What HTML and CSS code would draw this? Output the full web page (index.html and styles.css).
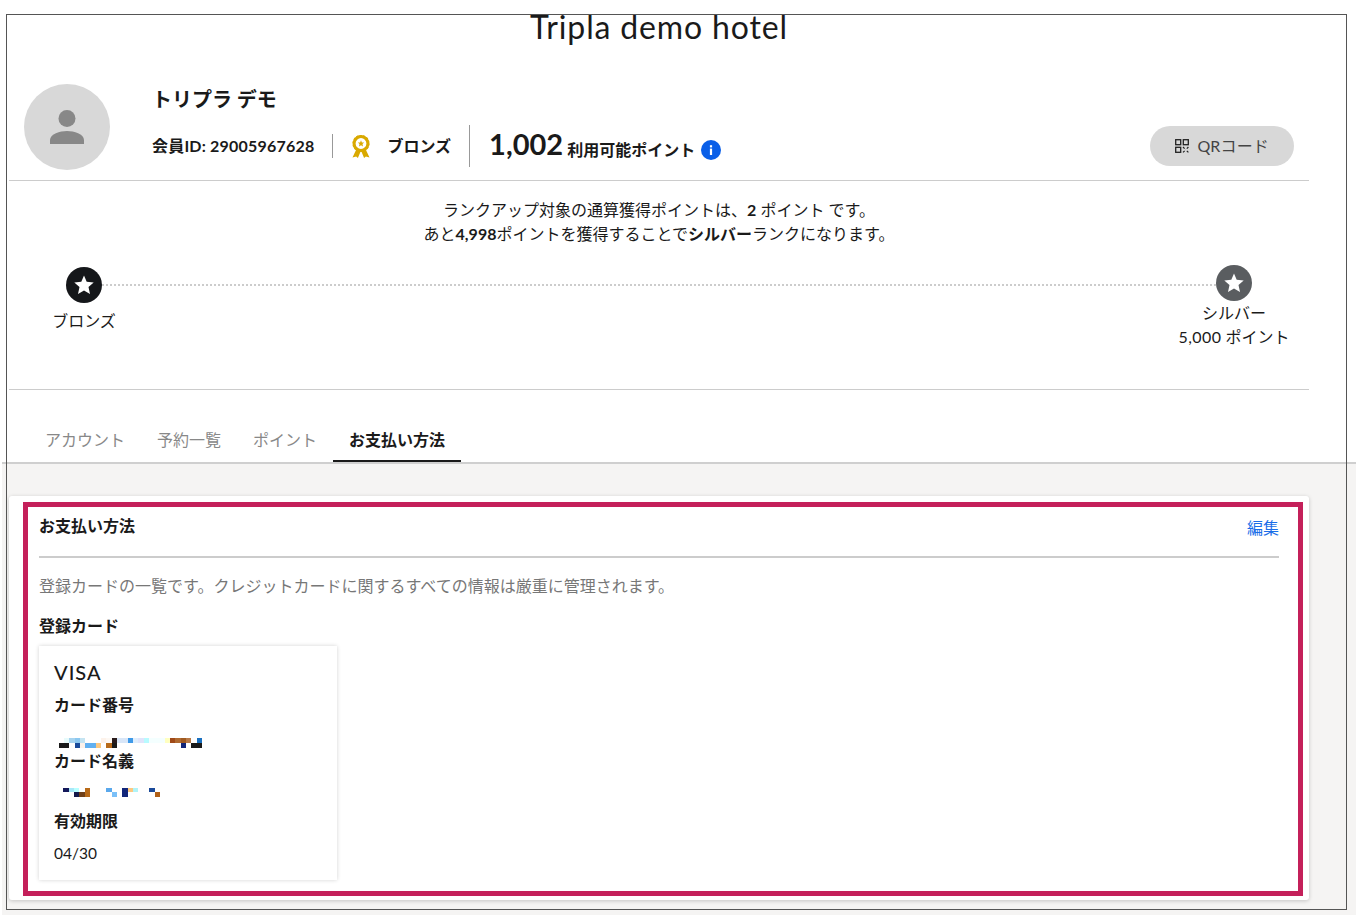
FILE: index.html
```html
<!DOCTYPE html>
<html lang="ja">
<head>
	<meta charset="UTF-8">
	<title>Tripla demo hotel</title>
	<link rel="stylesheet" href="styles.css">
</head>
<body>
	<div class="frame"></div>
	<div class="top">
		<h1 class="title">Tripla demo hotel</h1>

		<div class="profile">
			<div class="avatar">
				<svg width="34" height="34" viewBox="0 0 34 34"><circle cx="17" cy="8.5" r="8.5" fill="#888"/><path d="M0 34v-4c0-6 10-9 17-9s17 3 17 9v4z" fill="#888"/></svg>
			</div>
			<div class="profileInfo">
				<div class="name">トリプラ デモ</div>
				<div class="stats">
					<span class="memberId">会員ID: 29005967628</span>
					<span class="divider short"></span>
					<svg class="medal" width="18" height="23" viewBox="0 0 18 23">
						<path d="M4.5 14L0.5 22.5l3.6-.9 1.8 1.4L8.6 16.5zM13.5 14l4 8.5-3.6-.9-1.8 1.4L9.4 16.5z" fill="#d9a900"/>
						<circle cx="9" cy="8.5" r="6.9" fill="#fff" stroke="#d9a900" stroke-width="3"/>
						<circle cx="9" cy="8.5" r="8" fill="none" stroke="#d9a900" stroke-width="1.2" stroke-dasharray="2.2 1.4"/>
						<polygon points="9,5.3 9.9,7.4 12.2,7.6 10.5,9.1 11,11.4 9,10.2 7,11.4 7.5,9.1 5.8,7.6 8.1,7.4" fill="#d9a900"/>
					</svg>
					<span class="rankName">ブロンズ</span>
					<span class="divider"></span>
					<div class="points">
						<span class="pointsNum">1,002</span>
						<span class="pointsLabel">利用可能ポイント</span>
						<svg class="info" width="20" height="20" viewBox="0 0 20 20"><circle cx="10" cy="10" r="10" fill="#0a5fe8"/><rect x="8.9" y="8.6" width="2.2" height="6.4" fill="#fff"/><rect x="8.9" y="5.2" width="2.2" height="2.2" fill="#fff"/></svg>
					</div>
				</div>
			</div>
			<button class="qrButton">
				<svg width="14" height="14" viewBox="0 0 14 14" fill="none" stroke="#222" stroke-width="1.3">
					<rect x="0.7" y="0.7" width="5" height="5"/>
					<rect x="8.3" y="0.7" width="5" height="5"/>
					<rect x="0.7" y="8.3" width="5" height="5"/>
					<path d="M8 8l1.6 1.6M13.4 8l-1.6 1.6M8 13.4l1.6-1.6M13.4 13.4l-1.6-1.6M10.7 10.7h0.1" stroke-width="1.2"/>
				</svg>
				QRコード
			</button>
		</div>

		<div class="rank">
			<p class="rankMsg">ランクアップ対象の通算獲得ポイントは、<b>2</b> ポイント です。<br>あと<b>4,998</b>ポイントを獲得することで<b>シルバー</b>ランクになります。</p>
			<div class="rankTrack">
				<div class="rankDot bronze"><svg width="20" height="20" viewBox="0 0 20 20"><polygon points="10,0.5 12.7,6.7 19.7,7.5 14.5,12.1 16,18.9 10,15.4 4,18.9 5.5,12.1 0.3,7.5 7.3,6.7" fill="#fff"/></svg></div>
				<div class="rankLine"></div>
				<div class="rankDot silver"><svg width="20" height="20" viewBox="0 0 20 20"><polygon points="10,0.5 12.7,6.7 19.7,7.5 14.5,12.1 16,18.9 10,15.4 4,18.9 5.5,12.1 0.3,7.5 7.3,6.7" fill="#fff"/></svg></div>
			</div>
			<div class="rankLabels">
				<div class="rankLabel low">ブロンズ</div>
				<div class="rankLabel"><span>シルバー</span><br><span class="wideNum">5,000</span> ポイント</div>
			</div>
		</div>

		<div class="tabs">
			<div class="tab">アカウント</div>
			<div class="tab">予約一覧</div>
			<div class="tab">ポイント</div>
			<div class="tab active">お支払い方法</div>
		</div>
	</div>

	<div class="content">
		<div class="panel">
			<div class="outlined">
				<div class="panelHead">
					<h2>お支払い方法</h2>
					<a class="edit">編集</a>
				</div>
				<p class="desc">登録カードの一覧です。クレジットカードに関するすべての情報は厳重に管理されます。</p>
				<h3 class="cardsTitle">登録カード</h3>
				<div class="card">
					<div class="brand">VISA</div>
					<div class="fieldName">カード番号</div>
					<svg class="blurNum" width="143" height="10" viewBox="117 294 429 30" shape-rendering="crispEdges">
						<rect x="132" y="294" width="15" height="15" fill="#e8fbfb"/>
						<rect x="147" y="294" width="17" height="15" fill="#a6d3ef"/>
						<rect x="164" y="294" width="16" height="15" fill="#8cc8f0"/>
						<rect x="180" y="294" width="16" height="15" fill="#c5e4f2"/>
						<rect x="243" y="294" width="15" height="15" fill="#fdf2ea"/>
						<rect x="258" y="294" width="17" height="15" fill="#fdf8f3"/>
						<rect x="275" y="294" width="16" height="15" fill="#2a1c1c"/>
						<rect x="291" y="294" width="32" height="15" fill="#d8e6f8"/>
						<rect x="323" y="294" width="16" height="15" fill="#3f9ae8"/>
						<rect x="339" y="294" width="16" height="15" fill="#e0eefc"/>
						<rect x="355" y="294" width="16" height="15" fill="#e0e4fb"/>
						<rect x="371" y="294" width="16" height="15" fill="#b8fbff"/>
						<rect x="387" y="294" width="48" height="15" fill="#f4ffff"/>
						<rect x="435" y="294" width="15" height="15" fill="#ffffc0"/>
						<rect x="450" y="294" width="16" height="15" fill="#a04a18"/>
						<rect x="466" y="294" width="16" height="15" fill="#b06a30"/>
						<rect x="482" y="294" width="16" height="15" fill="#a05a20"/>
						<rect x="498" y="294" width="16" height="15" fill="#b87a48"/>
						<rect x="530" y="294" width="16" height="15" fill="#1a70c0"/>
						<rect x="117" y="309" width="30" height="15" fill="#1a1a1a"/>
						<rect x="164" y="309" width="16" height="15" fill="#1a4a9a"/>
						<rect x="180" y="309" width="16" height="15" fill="#fdf2ea"/>
						<rect x="196" y="309" width="32" height="15" fill="#62b0f0"/>
						<rect x="228" y="309" width="15" height="15" fill="#fcc880"/>
						<rect x="258" y="309" width="17" height="15" fill="#b86a18"/>
						<rect x="275" y="309" width="16" height="15" fill="#1a1a1a"/>
						<rect x="482" y="309" width="16" height="15" fill="#12267a"/>
						<rect x="514" y="309" width="32" height="15" fill="#1a1a1a"/>
					</svg>
					<div class="fieldName">カード名義</div>
					<svg class="blurName" width="97" height="9" viewBox="129 444 291 27" shape-rendering="crispEdges">
						<rect x="129" y="444" width="18" height="13" fill="#14185a"/>
						<rect x="147" y="444" width="16" height="13" fill="#a8e8f8"/>
						<rect x="163" y="444" width="15" height="13" fill="#b8ffff"/>
						<rect x="195" y="444" width="15" height="13" fill="#b86a18"/>
						<rect x="258" y="444" width="17" height="13" fill="#5aa8ec"/>
						<rect x="306" y="444" width="18" height="13" fill="#12267a"/>
						<rect x="324" y="444" width="16" height="13" fill="#fcc880"/>
						<rect x="340" y="444" width="15" height="13" fill="#b0f4f8"/>
						<rect x="387" y="444" width="17" height="13" fill="#1a4a9a"/>
						<rect x="162" y="457" width="16" height="14" fill="#14184a"/>
						<rect x="178" y="457" width="17" height="14" fill="#704018"/>
						<rect x="195" y="457" width="15" height="14" fill="#b86a18"/>
						<rect x="275" y="457" width="16" height="14" fill="#7ac0f8"/>
						<rect x="306" y="457" width="18" height="14" fill="#12267a"/>
						<rect x="405" y="457" width="15" height="14" fill="#b06018"/>
					</svg>
					<div class="fieldName">有効期限</div>
					<div class="fieldValue">04/30</div>
				</div>
			</div>
		</div>
	</div>
</body>
</html>
```

FILE: styles.css
```css
html, body {
	margin: 0;
	padding: 0;
	height: 915px;
	overflow: hidden;
}
body {
	position: relative;
	background-color: white;
	color: #1a1a1a;
	font-family: Lato, "Noto Sans CJK JP", sans-serif;
	font-size: 16px;
	line-height: 24px;
}
.frame { /* thin outline that sits over everything */
	position: absolute;
	left: 6px;
	top: 14px;
	width: 1339px;
	height: 894px;
	border: 1px solid #555;
	pointer-events: none;
}
.top {
	width: 1300px;
	margin-left: 9px;
	padding-top: 7px;
}
.title {
	margin: 0 0 37px 0;
	font-size: 32px;
	font-weight: 400;
	letter-spacing: 0.85px;
	line-height: 40px;
	text-align: center;
}
.profile {
	display: flex;
	padding: 0 15px 10px 15px;
	border-bottom: 1px solid #ccc;
}
.avatar {
	display: flex;
	align-items: center;
	justify-content: center;
	width: 86px;
	height: 86px;
	border-radius: 50%;
	background-color: #d8d8d8;
}
.profileInfo {
	margin-left: 42px;
}
.name {
	font-size: 20px;
	font-weight: 700;
	line-height: 30px;
}
.stats {
	display: flex;
	align-items: center;
	height: 42px;
	margin-top: 11px;
	font-weight: 700;
}
.memberId {
	margin-right: 18px;
	letter-spacing: 0.2px;
}
.divider {
	width: 1px;
	height: 42px;
	background-color: #999;
}
.divider.short {
	height: 24px;
}
.medal {
	margin: 0 17px 0 19px;
}
.rankName {
	margin-right: 18px;
}
.points {
	display: flex;
	align-items: baseline;
	margin-left: 19px;
}
.pointsNum {
	font-size: 29px;
	font-weight: 700;
}
.pointsLabel {
	position: relative;
	top: 1px;
	margin-left: 4px;
}
.info {
	align-self: center;
	margin: 8px 0 0 6px;
}
.qrButton {
	display: flex;
	align-items: center;
	gap: 8px;
	align-self: flex-end;
	height: 40px;
	margin: 0 0 4px auto;
	padding: 0 25px;
	border: 0;
	border-radius: 20px;
	background-color: #d8d8d8;
	color: #444;
	font: inherit;
	letter-spacing: 0.15px;
}
.rank {
	padding-bottom: 40px;
	border-bottom: 1px solid #ccc;
}
.rankMsg {
	margin: 0;
	padding-top: 17px;
	text-align: center;
}
.rankTrack {
	display: flex;
	align-items: flex-start;
	height: 36px;
	margin: 19px 57px 0 57px;
}
.rankDot {
	display: flex;
	align-items: center;
	justify-content: center;
	flex: none;
	width: 36px;
	height: 36px;
	border-radius: 50%;
}
.rankDot.bronze {
	margin-top: 2px;
	background-color: #15171a;
}
.rankDot.silver {
	background-color: #5a5d60;
}
.rankLine {
	flex: 1;
	margin-top: 19px;
	border-top: 2px dotted #ccc;
}
.rankLabels {
	display: flex;
	justify-content: space-between;
	padding: 0 15px;
}
.rankLabel {
	width: 120px;
	text-align: center;
}
.rankLabel.low {
	margin-top: 8px;
}
.wideNum {
	letter-spacing: 0.4px;
}
.tabs {
	display: flex;
	margin-top: 30px;
	padding-left: 20px;
}
.tab {
	padding: 8px 16px;
	color: #888;
	border-bottom: 2px solid transparent;
}
.tab.active {
	color: #1a1a1a;
	font-weight: 700;
	border-bottom-color: #1a1a1a;
}
.content {
	margin-left: 2px;
	padding: 32px 0 15px 7px;
	border-top: 2px solid #cfcfcf;
	background-color: #f5f4f3;
}
.panel {
	width: 1280px;
	padding: 6px 6px 4px 14px;
	border-radius: 3px;
	background-color: white;
	box-shadow: 0 1px 4px rgba(0,0,0,0.2);
}
.outlined {
	box-sizing: border-box;
	height: 394px;
	padding: 7px 19px 0 11px;
	border: 5px solid #c4205a;
}
.panelHead {
	display: flex;
	justify-content: space-between;
	height: 42px;
	border-bottom: 2px solid #ccc;
}
.panelHead h2 {
	margin: 0;
	font-size: 16px;
	font-weight: 700;
}
.edit {
	margin-top: 2px;
	color: #1a6ee8;
}
.desc {
	margin: 16px 0 0 0;
	color: #777;
}
.cardsTitle {
	margin: 16px 0 8px 0;
	font-size: 16px;
	font-weight: 700;
}
.card {
	box-sizing: border-box;
	width: 298px;
	height: 234px;
	padding: 12px 15px 0 15px;
	box-shadow: 0 0 4px rgba(0,0,0,0.18);
}
.brand {
	margin-bottom: 7px;
	font-size: 20px;
	font-weight: 500;
	letter-spacing: 1px;
	line-height: 28px;
}
.fieldName {
	font-weight: 700;
}
.blurNum {
	display: block;
	margin: 21px 0 1px 5px;
}
.blurName {
	display: block;
	margin: 15px 0 12px 9px;
}
.fieldValue {
	margin-top: 8px;
	font-size: 15.5px;
}
```
